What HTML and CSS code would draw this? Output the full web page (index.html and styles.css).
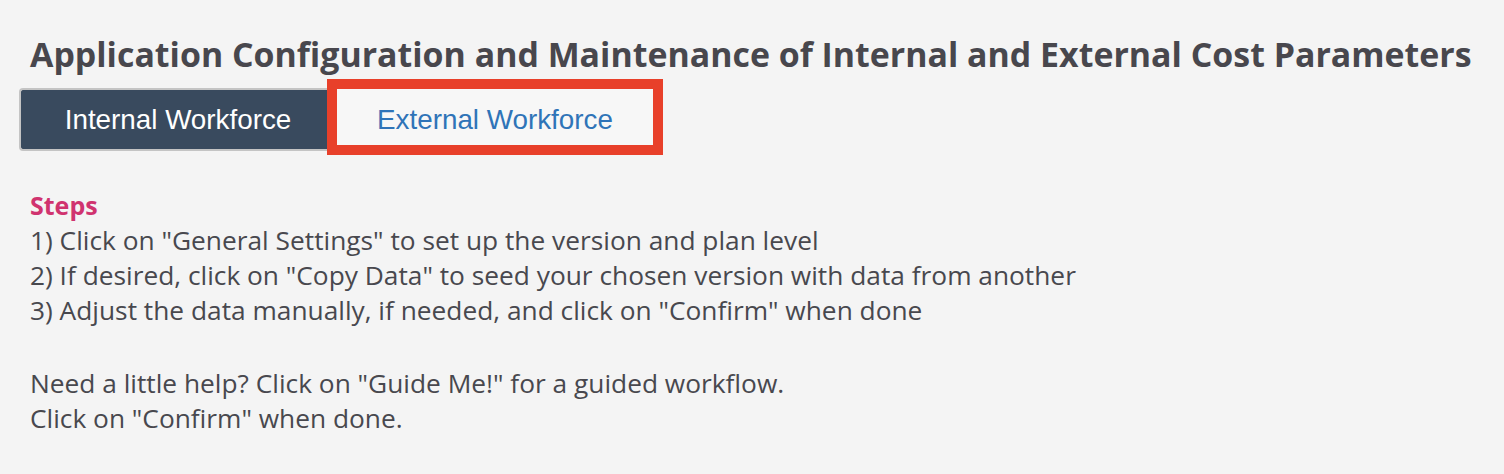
FILE: index.html
```html
<!DOCTYPE html>
<html>
<head>
<meta charset="utf-8">
<link rel="stylesheet" href="styles.css">
</head>
<body>
<div class="page">
  <h1 class="title">Application Configuration and Maintenance of Internal and External Cost Parameters</h1>
  <div class="tabs">
    <button class="tab tab-internal">Internal Workforce</button>
    <button class="tab tab-external">External Workforce</button>
    <div class="highlight"></div>
  </div>
  <div class="steps">
    <div class="steps-title">Steps</div>
    <div class="line">1) Click on "General Settings" to set up the version and plan level</div>
    <div class="line">2) If desired, click on "Copy Data" to seed your chosen version with data from another</div>
    <div class="line">3) Adjust the data manually, if needed, and click on "Confirm" when done</div>
    <div class="line blank">&nbsp;</div>
    <div class="line">Need a little help? Click on "Guide Me!" for a guided workflow.</div>
    <div class="line">Click on "Confirm" when done.</div>
  </div>
</div>
</body>
</html>
```
FILE: styles.css
```css
html, body {
  margin: 0;
  padding: 0;
  background: #f4f4f4;
}
.page {
  padding: 30px 0 0 30px;
  font-family: "Open Sans", sans-serif;
  color: #48484e;
}
.title {
  margin: 0;
  font-size: 33.9px;
  line-height: 48px;
  font-weight: 700;
  color: #48474d;
  white-space: nowrap;
}
.tabs {
  position: relative;
  display: flex;
  margin: 10px 0 0 -11px;
  height: 63px;
}
.tab {
  font-family: "Liberation Sans", Arial, sans-serif;
  font-size: 27.8px;
  border: none;
  padding: 0;
  margin: 0;
  height: 63px;
}
.tab-internal {
  width: 316px;
  background: #394a5e;
  color: #ffffff;
  border: 2px solid #c4c4c4;
  border-right: none;
  border-radius: 4px 0 0 4px;
}
.tab-external {
  width: 320px;
  background: #f7f7f7;
  color: #2f74b8;
  border-top: 1px solid #4a8ad0;
}
.highlight {
  position: absolute;
  left: 308px;
  top: -9px;
  width: 316px;
  height: 56px;
  border: 10px solid #e8402a;
}
.steps {
  margin-top: 36px;
  font-size: 26.3px;
  line-height: 35px;
}
.steps-title {
  color: #d0336f;
  font-weight: 700;
  font-size: 25px;
  line-height: 36px;
}
.line {
  white-space: nowrap;
}
.blank {
  height: 38px;
}
```
